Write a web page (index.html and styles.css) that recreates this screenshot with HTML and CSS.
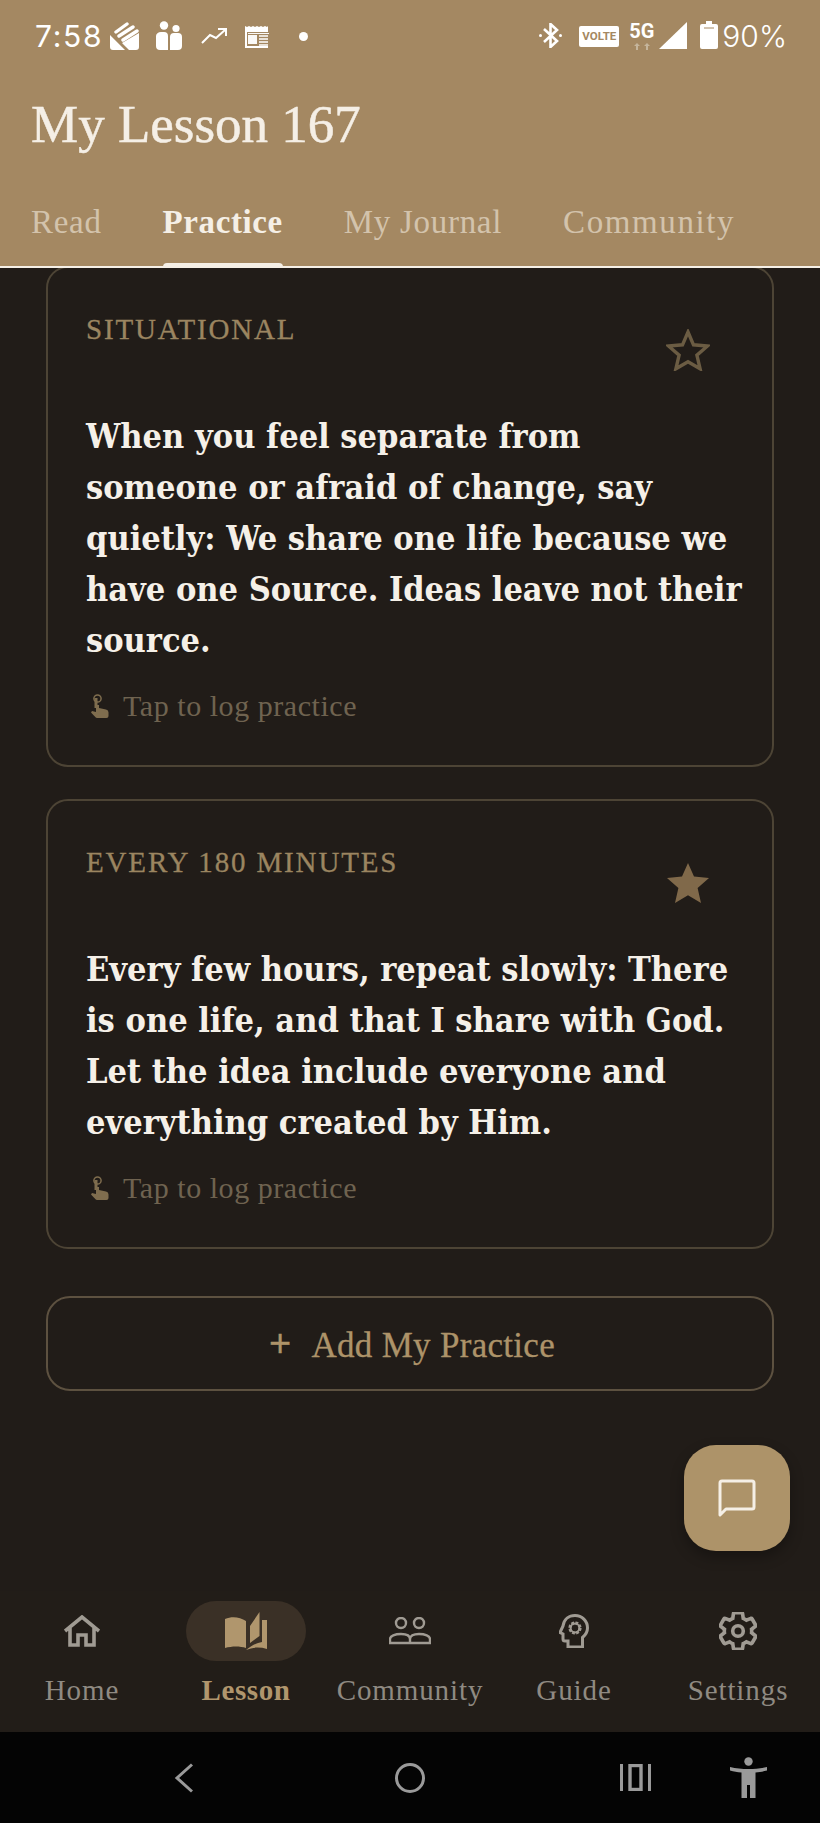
FILE: index.html
```html
<!DOCTYPE html>
<html lang="en">
<head>
    <meta charset="UTF-8">
    <meta name="viewport" content="width=device-width, initial-scale=1.0">
    <title>My Lesson 167</title>
    <link rel="stylesheet" href="styles.css">
</head>
<body>
    <header class="app-header">
        <div class="status-bar">
            <div class="status-left">
                <span class="clock">7:58</span>
                <svg class="st-stack" width="29" height="28" viewBox="0 0 29 28"><path d="M0 13 13 26 15 28H3a3 3 0 0 1-3-3Z M29 11V25a3 3 0 0 1-3 3H19L12 21 Z" fill="#fff"/><path d="M6 10 17 2M9 14 23 5M13 18 27 9" stroke="#fff" stroke-width="3.4" stroke-linecap="round"/></svg>
                <svg class="st-people" width="26" height="29" viewBox="0 0 26 29"><circle cx="8" cy="4.5" r="4.2" fill="#fff"/><circle cx="20" cy="7.5" r="3.6" fill="#fff"/><path d="M0 15a5 4 0 0 1 5-4h3a4 4 0 0 1 4 4V29H4a4 4 0 0 1-4-4ZM14 16a4 4 0 0 1 4-4h4a4 4 0 0 1 4 4V25a4 4 0 0 1-4 4H14Z" fill="#fff"/></svg>
                <svg class="st-trend" width="26" height="17" viewBox="0 0 26 17"><path d="M1 15 9 7l6 3L24 2M17 1h8v7" fill="none" stroke="#fff" stroke-width="2"/></svg>
                <svg class="st-cal" width="25" height="23" viewBox="0 0 25 23"><path d="M0 1l2 1 2-1 2 1 2-1 2 1 2-1 2 1 2-1 2 1 2-1 2 1 1-1V23H0Z" fill="#fff"/><path d="M2 7h21v14H2Z" fill="#a48862"/><path d="M3 8h21v1H3Z M3 10h9v9H3Z" fill="#fff" opacity=".95"/><path d="M14 11h9M14 14h9M14 17h9M14 20h9" stroke="#fff" stroke-width="1.4"/></svg>
                <span class="st-dot"></span>
            </div>
            <div class="status-right">
                <svg class="st-bt" width="23" height="25" viewBox="0 0 23 25"><path d="M5 6l13 12-6.500 6V1l6.500 6L5 19" fill="none" stroke="#fff" stroke-width="2.600"/><circle cx="1.500" cy="12.500" r="1.500" fill="#fff"/><circle cx="21.500" cy="12.500" r="1.500" fill="#fff"/></svg>
                <span class="st-volte">VOLTE</span>
                <span class="st-net"><span class="st-5g">5G</span><svg width="16" height="7" viewBox="0 0 16 7"><path d="M0 3 3 0l3 3H4v4H2V3ZM10 3l3-3 3 3h-2v4h-2V3Z" fill="#c5b59c"/></svg></span>
                <svg class="st-signal" width="28" height="27" viewBox="0 0 28 27"><path d="M28 0V27H0Z" fill="#fff"/></svg>
                <svg class="st-batt" width="18" height="28" viewBox="0 0 18 28"><path d="M6 0h6v3h4a2 2 0 0 1 2 2V26a2 2 0 0 1-2 2H2a2 2 0 0 1-2-2V5a2 2 0 0 1 2-2h4Z" fill="#fff"/><path d="M4 7h10" stroke="#a48862" stroke-width="1"/></svg>
                <span class="batt-text">90%</span>
            </div>
        </div>
        <h1>My Lesson 167</h1>
        <nav class="tabs">
            <span class="tab">Read</span>
            <span class="tab active">Practice</span>
            <span class="tab">My Journal</span>
            <span class="tab">Community</span>
        </nav>
    </header>

    <main class="content">
        <section class="card card-first">
            <div class="card-top">
                <span class="card-label">SITUATIONAL</span>
                <svg class="star" width="44" height="42" viewBox="0 0 44 42"><path d="M22 3l5.500 12.800 14 1.200-10.600 9.200 3.200 13.600L22 32.700 9.900 39.800l3.200-13.600L2.500 17l14-1.200Z" fill="none" stroke="#6b5c43" stroke-width="3.400"/></svg>
            </div>
            <p class="card-text">When you feel separate from<br>someone or afraid of change, say<br>quietly: We share one life because we<br>have one Source. Ideas leave not their<br>source.</p>
            <div class="tap-row">
                <svg width="18" height="24" viewBox="0 0 18 24"><path d="M5 4v10" stroke="#7f6d4e" stroke-width="3"/><circle cx="6.500" cy="4.500" r="3.600" fill="none" stroke="#7f6d4e" stroke-width="1.500"/><path d="M5 11h3v3l7 1.500a3 3 0 0 1 2.500 3V22a2 2 0 0 1-2 2H6a2 2 0 0 1-1.500-.8L0 18.500 1 17l4 1Z" fill="#7f6d4e"/></svg>
                <span>Tap to log practice</span>
            </div>
        </section>

        <section class="card">
            <div class="card-top">
                <span class="card-label">EVERY 180 MINUTES</span>
                <svg class="star" width="44" height="42" viewBox="0 0 44 42"><path d="M22 1l6 13.600 15 1.400-11.400 9.900L35 41 22 33.200 9 41l3.400-15.100L1 16l15-1.400Z" fill="#80694a"/></svg>
            </div>
            <p class="card-text">Every few hours, repeat slowly: There<br>is one life, and that I share with God.<br>Let the idea include everyone and<br>everything created by Him.</p>
            <div class="tap-row">
                <svg width="18" height="24" viewBox="0 0 18 24"><path d="M5 4v10" stroke="#7f6d4e" stroke-width="3"/><circle cx="6.500" cy="4.500" r="3.600" fill="none" stroke="#7f6d4e" stroke-width="1.500"/><path d="M5 11h3v3l7 1.500a3 3 0 0 1 2.500 3V22a2 2 0 0 1-2 2H6a2 2 0 0 1-1.500-.8L0 18.500 1 17l4 1Z" fill="#7f6d4e"/></svg>
                <span>Tap to log practice</span>
            </div>
        </section>

        <button class="add-btn" type="button"><span class="plus">+</span>Add My Practice</button>
    </main>

    <button class="fab" type="button">
        <svg width="38" height="38" viewBox="0 0 38 38"><path d="M2 36V4a2 2 0 0 1 2-2h30a2 2 0 0 1 2 2v24a2 2 0 0 1-2 2H8Z" fill="none" stroke="#f5efe6" stroke-width="3" stroke-linejoin="round"/></svg>
    </button>

    <nav class="bottom-nav">
        <div class="nav-item">
            <span class="nav-icon"><svg width="36" height="32" viewBox="0 0 36 32"><path d="M1 16 18 2l17 14M6 13V30H14V20H22V30H30V13" fill="none" stroke="#a09b93" stroke-width="3.600"/></svg></span>
            <span class="nav-label">Home</span>
        </div>
        <div class="nav-item selected">
            <span class="nav-icon"><svg width="42" height="38" viewBox="0 0 42 38"><path d="M0 7C7 4 15 5 21 9V36C15 34 7 34 0 36Z M25 14 34.500 0V24L25 31Z M37 8H42V37C35 35 28 35 21 38 27 33 32 31 37 30Z" fill="#b0966d"/></svg></span>
            <span class="nav-label">Lesson</span>
        </div>
        <div class="nav-item">
            <span class="nav-icon"><svg width="42" height="28" viewBox="0 0 42 28"><g fill="none" stroke="#a09b93" stroke-width="2.400"><circle cx="12" cy="6" r="5"/><circle cx="30" cy="6" r="5"/><path d="M1 26V22c0-3 5-5 11-5s9 2 9 5v4ZM21 26V22c0-3 3-5 9-5s11 2 11 5v4Z"/></g></svg></span>
            <span class="nav-label">Community</span>
        </div>
        <div class="nav-item">
            <span class="nav-icon"><svg width="30" height="34" viewBox="0 0 30 34"><path d="M9 33V27H6a2 2 0 0 1-2-2V20L1 18.500 4 12C5 5 10 1.500 16 1.500 23 1.500 28.500 7 28.500 14c0 4-2 7-5 9.500V33Z" fill="none" stroke="#a09b93" stroke-width="3"/><circle cx="16" cy="14" r="5" fill="none" stroke="#a09b93" stroke-width="3.200" stroke-dasharray="2.600 1.300"/><circle cx="16" cy="14" r="4.400" fill="none" stroke="#a09b93" stroke-width="2"/></svg></span>
            <span class="nav-label">Guide</span>
        </div>
        <div class="nav-item">
            <span class="nav-icon"><svg width="38" height="38" viewBox="2 2 20 20"><path d="M19.140 12.940c.04-.3.06-.61.06-.94 0-.32-.02-.64-.07-.94l2.030-1.580c.18-.14.23-.41.12-.61l-1.920-3.320c-.12-.22-.37-.29-.59-.22l-2.390.96c-.5-.38-1.030-.7-1.620-.94l-.36-2.540c-.04-.24-.24-.41-.48-.41h-3.840c-.24 0-.43.17-.47.41l-.36 2.540c-.59.24-1.130.57-1.620.94l-2.390-.96c-.22-.08-.47 0-.59.22L2.740 8.870c-.12.21-.08.47.12.61l2.030 1.580c-.05.3-.09.63-.09.94s.02.64.07.94l-2.030 1.580c-.18.14-.23.41-.12.61l1.920 3.320c.12.22.37.29.59.22l2.390-.96c.5.38 1.030.7 1.620.94l.36 2.540c.05.24.24.41.48.41h3.840c.24 0 .44-.17.47-.41l.36-2.540c.59-.24 1.130-.56 1.620-.94l2.390.96c.22.08.47 0 .59-.22l1.920-3.320c.12-.22.07-.47-.12-.61Z" fill="none" stroke="#a09b93" stroke-width="1.900"/><circle cx="12" cy="12" r="2.800" fill="none" stroke="#a09b93" stroke-width="1.900"/></svg></span>
            <span class="nav-label">Settings</span>
        </div>
    </nav>

    <div class="system-nav">
        <svg class="sys-back" width="20" height="30" viewBox="0 0 20 30"><path d="M18 1.500 3 15l15 13.500" fill="none" stroke="#9a9a9a" stroke-width="3"/></svg>
        <svg class="sys-home" width="32" height="32" viewBox="0 0 32 32"><circle cx="16" cy="16" r="13.500" fill="none" stroke="#9a9a9a" stroke-width="3"/></svg>
        <svg class="sys-recent" width="31" height="27" viewBox="0 0 31 27"><path d="M0 0h3v27H0ZM28 0h3v27h-3Z" fill="#9a9a9a"/><rect x="10" y="1.500" width="11" height="24" fill="none" stroke="#9a9a9a" stroke-width="3.400"/></svg>
        <svg class="sys-access" width="37" height="41" viewBox="0 0 37 41"><circle cx="18.500" cy="4.500" r="4.200" fill="#9a9a9a"/><path d="M0 10c6 1.500 12 2 18.500 2S31 11.500 37 10v3.500c-4 1-7 1.700-11.500 2V41H20V28h-3v13H11.500V15.500C7 15.200 4 14.500 0 13.500Z" fill="#9a9a9a"/></svg>
    </div>
</body>
</html>
```

FILE: styles.css
```css
* {
    box-sizing: border-box;
}
html, body {
    margin: 0;
    height: 100%;
}
body {
    position: relative;
    display: flex;
    flex-direction: column;
    width: 820px;
    height: 1823px;
    overflow: hidden;
    background-color: #211c18;
    font-family: "Liberation Serif", serif;
}

/* header */
.app-header {
    flex: none;
    height: 268px;
    background-color: #a48862;
    border-bottom: 2px solid #f5efe6;
}
.status-bar {
    display: flex;
    justify-content: space-between;
    align-items: flex-start;
    height: 70px;
    padding: 21px 33px 0 35px;
    color: #ffffff;
}
.status-left, .status-right {
    display: flex;
    align-items: flex-start;
}
.clock {
    font-family: Inter, sans-serif;
    font-size: 30px;
    line-height: 30px;
    letter-spacing: 1.7px;
}
.st-stack { margin-left: 7px; margin-top: 1px; }
.st-people { margin-left: 17px; }
.st-trend { margin-left: 19px; margin-top: 7px; }
.st-cal { margin-left: 18px; margin-top: 4px; }
.st-dot {
    width: 9px;
    height: 9px;
    margin: 11px 0 0 29px;
    border-radius: 50%;
    background-color: #ffffff;
}
.st-bt { margin-top: 2px; }
.st-volte {
    width: 40px;
    height: 21px;
    margin: 5px 0 0 17px;
    border-radius: 2px;
    background-color: #ffffff;
    color: #a48862;
    font-family: Roboto, sans-serif;
    font-weight: 700;
    font-size: 11.5px;
    line-height: 21px;
    text-align: center;
}
.st-net {
    display: flex;
    flex-direction: column;
    align-items: center;
    width: 25px;
    margin-left: 10px;
}
.st-5g {
    font-family: Roboto, sans-serif;
    font-weight: 700;
    font-size: 20px;
    line-height: 21px;
    margin-bottom: 1px;
}
.st-signal { margin-left: 5px; margin-top: 1px; }
.st-batt { margin-left: 13px; }
.batt-text {
    margin-left: 4px;
    font-family: Inter, sans-serif;
    font-weight: 300;
    font-size: 30px;
    line-height: 30px;
}
.app-header h1 {
    margin: 24px 0 0 31px;
    color: #f5efe6;
    font-weight: 400;
    font-size: 53px;
    line-height: 60px;
    -webkit-text-stroke: 0.5px #f5efe6;
}
.tabs {
    display: flex;
    gap: 61px;
    margin: 47px 0 0 31px;
}
.tab {
    position: relative;
    color: #d3c3ac;
    font-size: 33px;
    line-height: 42px;
    letter-spacing: 0.7px;
    white-space: nowrap;
}
.tab:last-child {
    letter-spacing: 1.6px;
}
.tab.active {
    color: #f5efe6;
    font-weight: 700;
    letter-spacing: 0.6px;
}
.tab.active::after {
    content: "";
    position: absolute;
    left: 0;
    right: 0;
    top: 62px;
    height: 5px;
    border-radius: 4px 4px 0 0;
    background-color: #f5efe6;
}

/* cards */
.content {
    flex: 1;
    min-height: 0;
    overflow: hidden;
    padding: 0 46px;
}
.card {
    height: 450px;
    margin-bottom: 32px;
    padding: 43px 38px 0 38px;
    border: 2px solid #4d4435;
    border-radius: 22px;
}
.card-first {
    height: 501px;
    margin-top: -2px;
}
.card-top {
    display: flex;
    justify-content: space-between;
    align-items: flex-start;
    height: 100px;
}
.card-label {
    color: #9b8560;
    font-size: 29px;
    line-height: 36px;
    letter-spacing: 1.85px;
    -webkit-text-stroke: 0.3px #9b8560;
}
.star {
    margin: 18px 24px 0 0;
}
.card-text {
    margin: 0 -10px 0 0;
    color: #f5f0e8;
    font-family: "DejaVu Serif Condensed", "DejaVu Serif", serif;
    font-weight: 700;
    font-size: 34px;
    line-height: 51px;
}
.tap-row {
    display: flex;
    align-items: center;
    gap: 14px;
    margin-top: 22px;
    padding-left: 5px;
    color: #6f6350;
    font-size: 30px;
    line-height: 36px;
    letter-spacing: 0.55px;
}
.add-btn {
    display: flex;
    justify-content: center;
    align-items: center;
    width: 100%;
    height: 95px;
    margin-top: 47px;
    padding: 5px 0 0 4px;
    border: 2px solid #5d5140;
    border-radius: 24px;
    background: none;
    color: #ad9369;
    font-family: "Liberation Serif", serif;
    font-size: 35px;
    letter-spacing: 0.3px;
    -webkit-text-stroke: 0.3px #ad9369;
}
.plus {
    margin-right: 20px;
    margin-top: -6px;
    font-size: 38px;
    font-family: "Liberation Sans", sans-serif;
    font-weight: 300;
}

/* chat button */
.fab {
    position: absolute;
    left: 684px;
    top: 1445px;
    width: 106px;
    height: 106px;
    display: flex;
    justify-content: center;
    align-items: center;
    padding: 0;
    border: none;
    border-radius: 32px;
    background-color: #ad9369;
    box-shadow: 0 6px 14px rgba(0, 0, 0, 0.3);
}

/* bottom nav */
.bottom-nav {
    flex: none;
    display: grid;
    grid-template-columns: repeat(5, 164px);
    height: 141px;
    padding-top: 10px;
    background-color: #221d18;
}
.nav-item {
    display: flex;
    flex-direction: column;
    align-items: center;
}
.nav-icon {
    display: flex;
    justify-content: center;
    align-items: center;
    width: 120px;
    height: 60px;
    border-radius: 30px;
}
.selected .nav-icon {
    background-color: #3a3026;
}
.nav-label {
    margin-top: 11px;
    color: #8f8a82;
    font-size: 29px;
    line-height: 36px;
    letter-spacing: 0.9px;
    white-space: nowrap;
}
.selected .nav-label {
    color: #b0966d;
    font-weight: 700;
    letter-spacing: 0.6px;
}

/* android nav */
.system-nav {
    flex: none;
    display: flex;
    align-items: flex-start;
    height: 91px;
    background-color: #040404;
}
.sys-back { margin: 31px 0 0 174px; }
.sys-home { margin: 30px 0 0 200px; }
.sys-recent { margin: 32px 0 0 194px; }
.sys-access { margin: 25px 0 0 79px; }
```
